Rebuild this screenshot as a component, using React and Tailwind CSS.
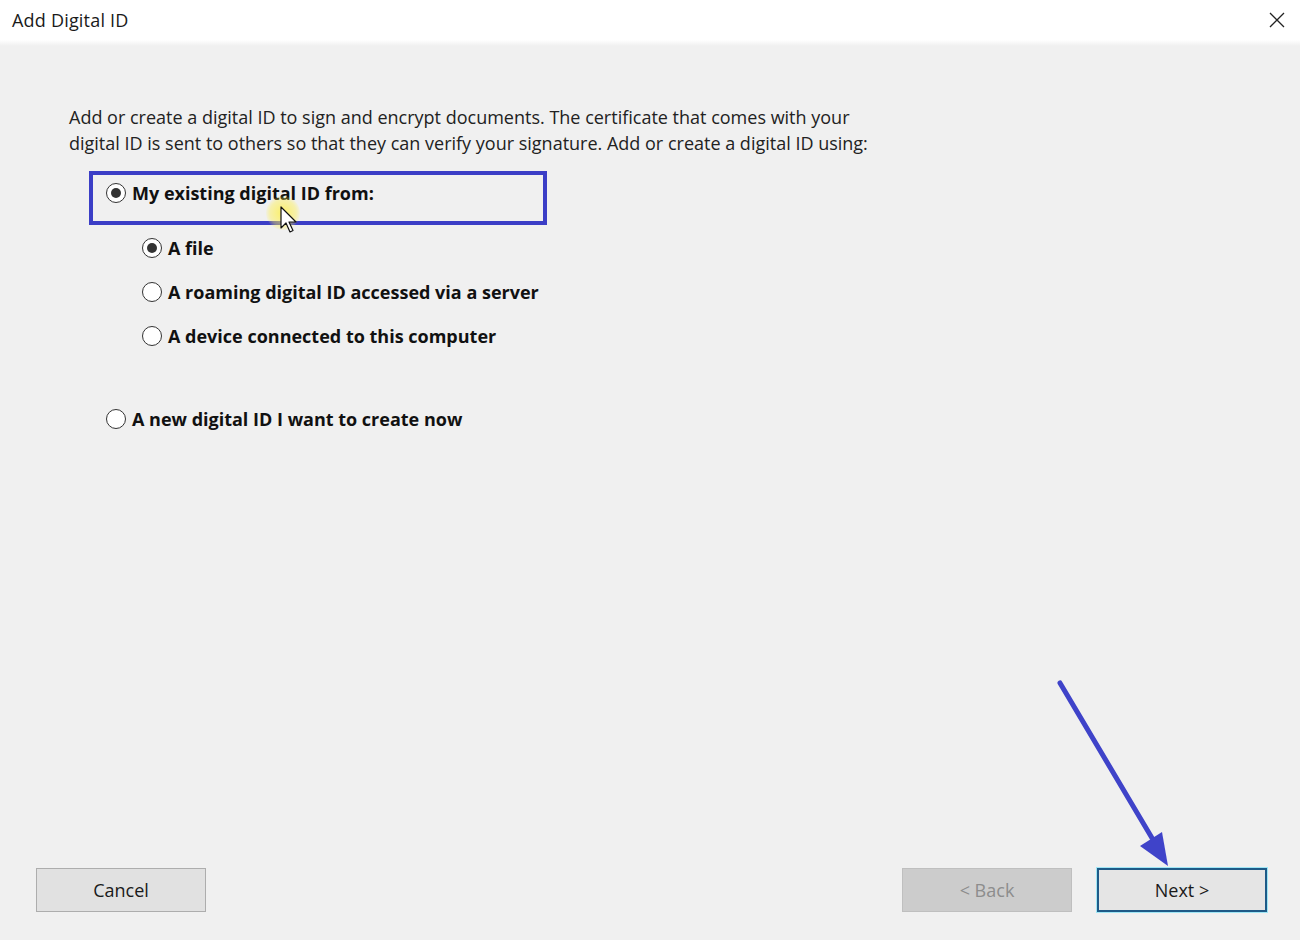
import React from 'react';

function Radio({ checked }) {
  return (
    <span className="w-[20px] h-[20px] rounded-full border border-[#333] bg-white flex items-center justify-center shrink-0">
      {checked && <span className="w-[10px] h-[10px] rounded-full bg-[#333]" />}
    </span>
  );
}

function Option({ checked, label, className = '' }) {
  return (
    <div className={`flex items-center gap-[6px] h-[28px] ${className}`}>
      <Radio checked={checked} />
      <span className="text-[18px] font-bold text-[#111]">{label}</span>
    </div>
  );
}

export default function App() {
  return (
    <div
      className="relative w-[1300px] h-[940px] bg-[#f0f0f0] flex flex-col overflow-hidden"
      style={{ fontFamily: '"Open Sans", "Noto Sans", sans-serif' }}
    >
      {/* Title bar */}
      <div className="h-[40px] bg-white flex items-center justify-between pl-[12px] pr-[14px] shrink-0">
        <span className="text-[18px] tracking-[0.2px] text-[#1a1a1a]">Add Digital ID</span>
        <svg width="18" height="18" viewBox="0 0 18 18" className="mb-[1px]">
          <path d="M2 2L16 16M16 2L2 16" stroke="#222" strokeWidth="1.3" />
        </svg>
      </div>
      <div className="h-[6px] bg-gradient-to-b from-white to-[#f0f0f0] shrink-0" />

      {/* Body */}
      <div className="flex-1 pl-[69px] pt-[58px] flex flex-col">
        <p className="text-[18px] leading-[26px] text-[#222] w-[820px]">
          Add or create a digital ID to sign and encrypt documents. The certificate that comes with your
          digital ID is sent to others so that they can verify your signature. Add or create a digital ID using:
        </p>

        <div className="ml-[20px] mt-[15px] w-[458px] h-[54px] border-[4px] border-[#3b3ec6] flex items-start pt-[4px] pl-[13px]">
          <Option checked label="My existing digital ID from:" />
        </div>

        <div className="ml-[73px] mt-[9px] flex flex-col gap-[16px]">
          <Option checked label="A file" />
          <Option label="A roaming digital ID accessed via a server" />
          <Option label="A device connected to this computer" />
        </div>

        <Option className="ml-[37px] mt-[55px]" label="A new digital ID I want to create now" />
      </div>

      {/* Buttons */}
      <div className="flex items-center justify-between pl-[36px] pr-[33px] pb-[28px] shrink-0">
        <button className="w-[170px] h-[44px] bg-[#e1e1e1] border border-[#adadad] text-[18px] text-[#1a1a1a] pt-[1px]">
          Cancel
        </button>
        <div className="flex items-center gap-[25px]">
          <button className="w-[170px] h-[44px] bg-[#cccccc] border border-[#bfbfbf] text-[18px] text-[#8d8d8d] pt-[1px]">
            &lt; Back
          </button>
          <button className="w-[170px] h-[44px] bg-[#e5e5e5] border-2 border-[#1e5a87] ring-1 ring-[#9fe6f5] text-[18px] text-[#1a1a1a] pt-[1px]">
            Next &gt;
          </button>
        </div>
      </div>

      {/* Annotation arrow */}
      <svg className="absolute left-0 top-0 pointer-events-none" width="1300" height="940">
        <line x1="1060" y1="683" x2="1152" y2="838" stroke="#3f43c9" strokeWidth="5" strokeLinecap="round" />
        <polygon points="1168,866 1140,846 1162,832" fill="#3f43c9" />
      </svg>

      {/* Cursor with highlight */}
      <div className="absolute left-[266px] top-[196px] w-[34px] h-[34px] rounded-full bg-[radial-gradient(circle,rgba(255,240,70,0.8)_0%,rgba(255,240,70,0.4)_55%,rgba(255,240,70,0)_75%)] pointer-events-none" />
      <svg className="absolute left-[280px] top-[206px] pointer-events-none" width="20" height="30" viewBox="0 0 20 30">
        <path d="M1 1L1 22L6 17L10 26L13 24.5L9 16L16 16Z" fill="white" stroke="#111" strokeWidth="1.2" strokeLinejoin="round" />
      </svg>
    </div>
  );
}
